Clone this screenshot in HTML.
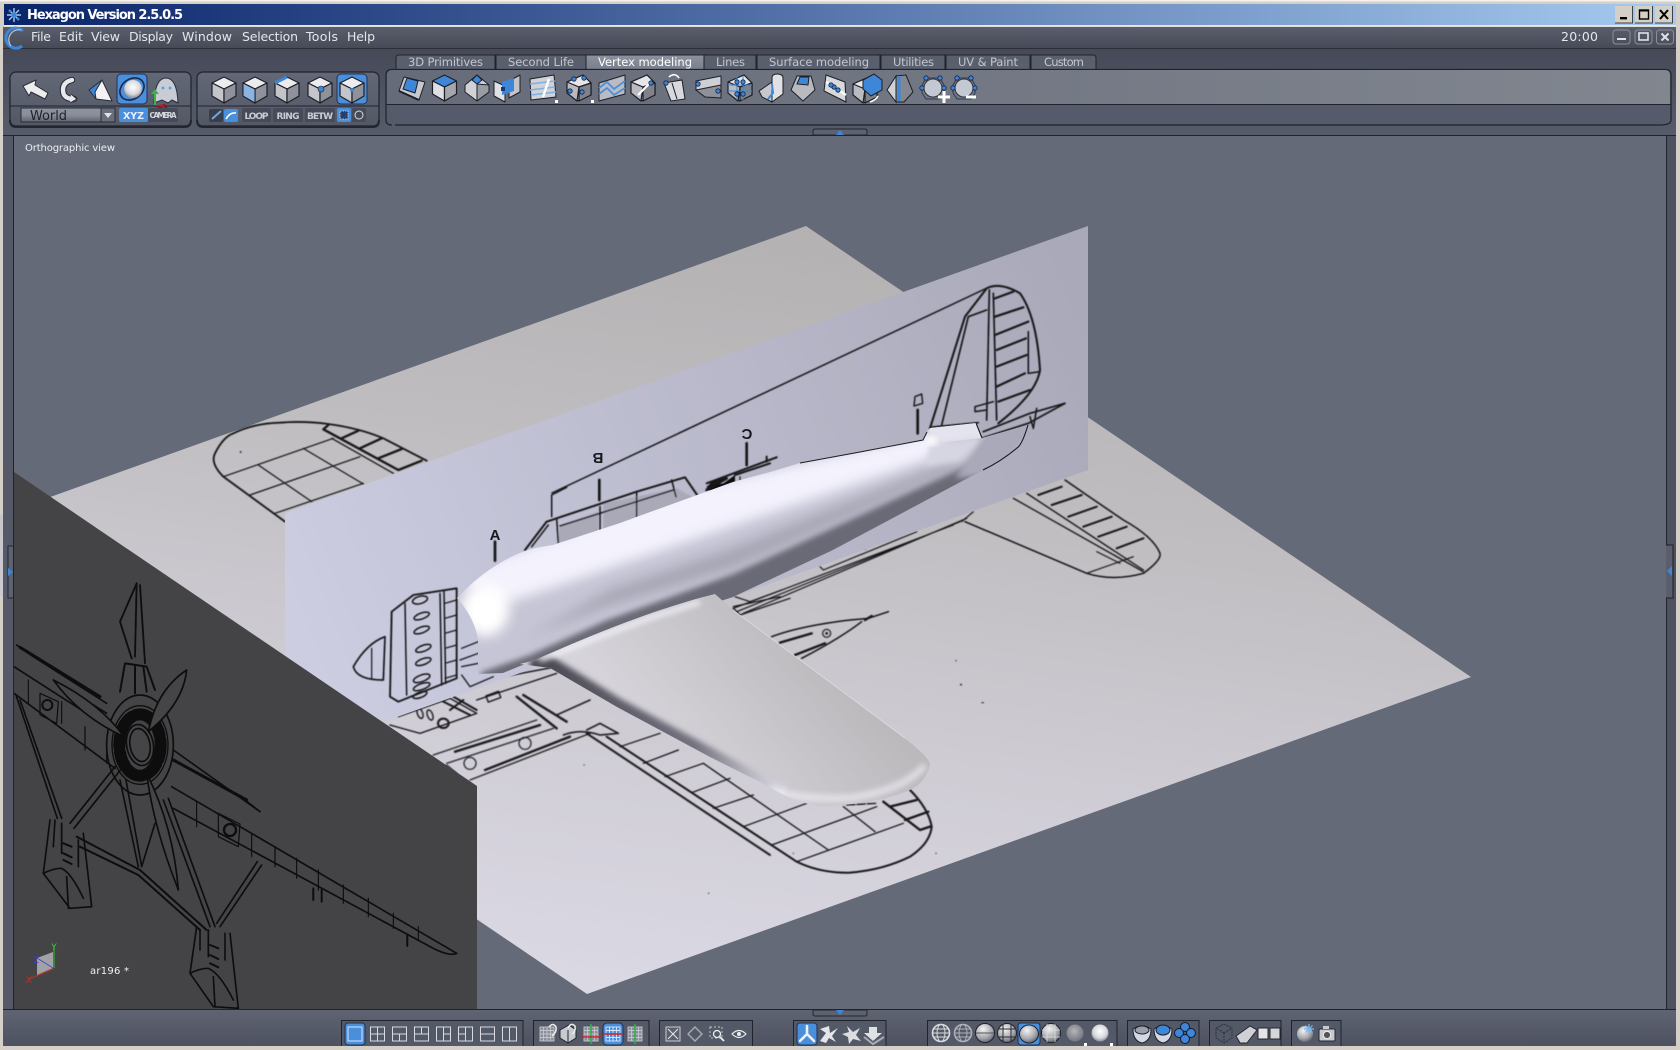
<!DOCTYPE html>
<html><head><meta charset="utf-8"><title>Hexagon Version 2.5.0.5</title>
<style>html,body{margin:0;padding:0;background:#d4d0c8;overflow:hidden}svg{display:block}text{font-family:"DejaVu Sans","Liberation Sans",sans-serif}</style></head>
<body>
<svg xmlns="http://www.w3.org/2000/svg" width="1680" height="1050" viewBox="0 0 1680 1050">
<defs>
<linearGradient id="title" x1="0" x2="1" y1="0" y2="0"><stop offset="0" stop-color="#0a246a"/><stop offset="1" stop-color="#a6caf0"/></linearGradient>
<linearGradient id="menu" x1="0" x2="0" y1="0" y2="1"><stop offset="0" stop-color="#5a5e6d"/><stop offset="1" stop-color="#474b58"/></linearGradient>
<linearGradient id="tbar" x1="0" x2="0" y1="0" y2="1"><stop offset="0" stop-color="#464a58"/><stop offset="1" stop-color="#575c6b"/></linearGradient>
<linearGradient id="bbar" x1="0" x2="0" y1="0" y2="1"><stop offset="0" stop-color="#5f6472"/><stop offset="1" stop-color="#4d5160"/></linearGradient>
<linearGradient id="pup" x1="0" x2="1" y1="0" y2="0"><stop offset="0" stop-color="#666b7a"/><stop offset="1" stop-color="#81868f"/></linearGradient>
<linearGradient id="pan" x1="0" x2="0" y1="0" y2="1"><stop offset="0" stop-color="#636877"/><stop offset="1" stop-color="#535866"/></linearGradient>
<linearGradient id="acttab" x1="0" x2="0" y1="0" y2="1"><stop offset="0" stop-color="#8d929f"/><stop offset="1" stop-color="#797e8c"/></linearGradient>
<linearGradient id="combo" x1="0" x2="0" y1="0" y2="1"><stop offset="0" stop-color="#8f93a0"/><stop offset=".5" stop-color="#8a8e9a"/><stop offset="1" stop-color="#5f6370"/></linearGradient>
<linearGradient id="ground" gradientUnits="userSpaceOnUse" x1="806" y1="226" x2="700" y2="994"><stop offset="0" stop-color="#b3b1b1"/><stop offset=".35" stop-color="#c0bec1"/><stop offset=".65" stop-color="#cecbd3"/><stop offset="1" stop-color="#dad8e3"/></linearGradient>
<linearGradient id="side" gradientUnits="userSpaceOnUse" x1="300" y1="640" x2="1088" y2="330"><stop offset="0" stop-color="#cdcde2"/><stop offset="1" stop-color="#a9a9b9"/></linearGradient>
<linearGradient id="wing" gradientUnits="userSpaceOnUse" x1="820" y1="650" x2="680" y2="770"><stop offset="0" stop-color="#bbb9bc"/><stop offset="1" stop-color="#d6d4da"/></linearGradient>
<linearGradient id="wstroke" gradientUnits="userSpaceOnUse" x1="550" y1="667" x2="790" y2="800"><stop offset="0" stop-color="#4d4c56"/><stop offset=".6" stop-color="#73727e"/><stop offset="1" stop-color="#e8e7f2"/></linearGradient>
<radialGradient id="sph" cx=".4" cy=".3" r=".8"><stop offset="0" stop-color="#f4f4f4"/><stop offset=".6" stop-color="#a4a6ac"/><stop offset="1" stop-color="#4e505a"/></radialGradient>
<radialGradient id="sphw" cx=".5" cy=".4" r=".65"><stop offset="0" stop-color="#fff"/><stop offset=".6" stop-color="#d8d9de"/><stop offset="1" stop-color="#7a7d88"/></radialGradient>
<radialGradient id="sphg" cx=".45" cy=".4" r=".7"><stop offset="0" stop-color="#b4b5ba"/><stop offset="1" stop-color="#6a6c76"/></radialGradient>
<clipPath id="fusclip"><path d="M457,598 C470,585 485,570 513,556 C530,548 540,547 553,545 L620,523 L733,482 L770,472 L800,463 L860,452 L923,440 L927,432 L930,428 L976,423 L982,438 L1028,425 C1025,440 1010,455 983,470 L833,550 L733,597 L600,640 L520,666 L503,673 L478,674 L478,640 C476,625 468,610 457,598 Z"/></clipPath>
<clipPath id="wingclip"><path d="M520,664 L535,660 C580,640 650,610 715,594 L733,610 L907,740 Q930,758 930,765 Q925,785 905,792 Q870,805 820,806 Q795,803 770,787 L710,757 L617,707 L550,668 Z"/></clipPath>
<filter id="b04" x="-5%" y="-5%" width="110%" height="110%"><feGaussianBlur stdDeviation=".4"/></filter>
<filter id="b3" x="-20%" y="-20%" width="140%" height="140%"><feGaussianBlur stdDeviation="3"/></filter>
<filter id="b6" x="-30%" y="-30%" width="160%" height="160%"><feGaussianBlur stdDeviation="6"/></filter>
<g id="cube" stroke="#1d1f26" stroke-width="1.2" stroke-linejoin="round"><polygon points="0,-13 12,-7 0,-1 -12,-7" fill="#ececee"/><polygon points="-12,-7 0,-1 0,13 -12,6" fill="#c3c5ca"/><polygon points="12,-7 0,-1 0,13 12,6" fill="#8f929a"/></g>
<g id="cubeb" stroke="#1d1f26" stroke-width="1.2" stroke-linejoin="round"><polygon points="0,-13 12,-7 0,-1 -12,-7" fill="#3d86d8"/><polygon points="-12,-7 0,-1 0,13 -12,6" fill="#dfe0e4"/><polygon points="12,-7 0,-1 0,13 12,6" fill="#a3a6ac"/></g>
<g id="mod" stroke="#1d1f26" stroke-width="1.2" stroke-linejoin="round"><polygon points="-12,-6 4,-13 12,-5 12,7 -2,13 -12,5" fill="#b9bbc1"/><polygon points="-12,-6 0,-1 12,-5 4,-13" fill="#e6e6e9"/><polygon points="0,-1 0,13 12,7 12,-5" fill="#7f828a"/><path d="M0,-1 L-2,13" fill="none"/></g>
<g id="dot"><circle r="2.2" fill="#3d86d8" stroke="#16233e" stroke-width=".8"/></g>
<g id="ball"><circle r="9.5" fill="url(#sph)" stroke="#20222a"/></g>
</defs>

<rect width="1680" height="1050" fill="#d4d0c8"/>
<rect x="0" y="0" width="1680" height="1.5" fill="#f4f2ea"/>
<rect x="4" y="4" width="1672" height="21" fill="url(#title)"/>
<rect x="4" y="25" width="1672" height="1.5" fill="#e8e8e8"/>
<rect x="3" y="27" width="1673" height="1019" fill="#50556a"/>
<rect x="3" y="27" width="1673" height="21" fill="url(#menu)"/>
<rect x="3" y="48" width="1673" height="1" fill="#2c2f38"/>
<rect x="3" y="49" width="1673" height="87" fill="url(#tbar)"/>
<rect x="3" y="135" width="1673" height="1" fill="#21242c"/>

<!-- title bar -->
<g stroke="#a8cdf2" stroke-width="1.4" fill="none"><path d="M14,8 V22 M7,15 H21 M9,10 L19,20 M19,10 L9,20"/></g>
<g fill="#3a86d8"><circle cx="14" cy="15" r="2.4"/><circle cx="10" cy="11" r="1.4"/><circle cx="18" cy="19" r="1.4"/></g>
<text x="27" y="19" font-size="13" font-weight="bold" fill="#fff" textLength="156" lengthAdjust="spacing">Hexagon Version 2.5.0.5</text>
<g><rect x="1615" y="6" width="18" height="17" fill="#d4d0c8"/><rect x="1635" y="6" width="18" height="17" fill="#d4d0c8"/><rect x="1655" y="6" width="18" height="17" fill="#d4d0c8"/>
<path d="M1632.5,6 V23 H1615 M1652.5,6 V23 H1635 M1672.5,6 V23 H1655" stroke="#404040" fill="none"/>
<rect x="1620" y="17" width="7" height="2.4" fill="#000"/><rect x="1639.5" y="10" width="9" height="9" fill="none" stroke="#000" stroke-width="1.4"/><rect x="1639" y="9.5" width="10" height="2" fill="#000"/>
<path d="M1660,10 L1668,19 M1668,10 L1660,19" stroke="#000" stroke-width="2"/></g>

<!-- menu -->
<path d="M23,31 A10,10 0 1 0 22,46" fill="none" stroke="#3d86d8" stroke-width="3"/><path d="M21,30 A10,10 0 0 0 11,46" fill="none" stroke="#c6d6ea" stroke-width="1"/>
<g font-size="12.5" fill="#e4e6ea">
<text x="31" y="41" textLength="20" lengthAdjust="spacing">File</text><text x="59" y="41" textLength="24" lengthAdjust="spacing">Edit</text><text x="91" y="41" textLength="29" lengthAdjust="spacing">View</text><text x="129" y="41" textLength="44" lengthAdjust="spacing">Display</text><text x="182" y="41" textLength="50" lengthAdjust="spacing">Window</text><text x="242" y="41" textLength="56" lengthAdjust="spacing">Selection</text><text x="306" y="41" textLength="32" lengthAdjust="spacing">Tools</text><text x="347" y="41" textLength="28" lengthAdjust="spacing">Help</text>
<text x="1561" y="41" textLength="37" lengthAdjust="spacing">20:00</text></g>
<g fill="none" stroke="#8b8f9b"><rect x="1613" y="30" width="17" height="14" rx="3"/><rect x="1635" y="30" width="17" height="14" rx="3"/><rect x="1656.5" y="30" width="17" height="14" rx="3"/></g>
<rect x="1617" y="38" width="9" height="2" fill="#dfe1e6"/><rect x="1639" y="33" width="9" height="7" fill="none" stroke="#dfe1e6" stroke-width="1.6"/><path d="M1661.5,33.5 L1668.5,40.5 M1668.5,33.5 L1661.5,40.5" stroke="#dfe1e6" stroke-width="2"/>

<!-- tabs -->
<g stroke="#20232b" fill="#5a5f6e">
<path d="M396,70 V58 Q396,55 399,55 H495 V70"/><path d="M496,70 V55 H586 V70"/><path d="M704,70 V55 H756 V70"/><path d="M757,70 V55 H880 V70"/><path d="M881,70 V55 H945 V70"/><path d="M946,70 V55 H1030 V70"/><path d="M1031,70 V55 H1093 Q1096,55 1096,58 V70"/>
</g>
<path d="M586,70 V55 H704 V70" fill="url(#acttab)" stroke="#20232b"/>
<g font-size="11.5" fill="#c2c6cf">
<text x="408" y="66" textLength="75" lengthAdjust="spacing">3D Primitives</text><text x="508" y="66" textLength="66" lengthAdjust="spacing">Second Life</text>
<text x="598" y="66" textLength="94" lengthAdjust="spacing" fill="#fff">Vertex modeling</text><text x="716" y="66" textLength="29" lengthAdjust="spacing">Lines</text><text x="769" y="66" textLength="100" lengthAdjust="spacing">Surface modeling</text><text x="893" y="66" textLength="41" lengthAdjust="spacing">Utilities</text><text x="958" y="66" textLength="60" lengthAdjust="spacing">UV &amp; Paint</text><text x="1044" y="66" textLength="40" lengthAdjust="spacing">Custom</text></g>

<!-- panels -->
<rect x="10" y="72" width="181" height="54" rx="6" fill="url(#pan)" stroke="#20232b" stroke-width="1.2"/>
<rect x="197" y="72" width="182" height="54" rx="6" fill="url(#pan)" stroke="#20232b" stroke-width="1.2"/>
<path d="M10,106 H191 M197,106 H379" stroke="#20232b"/>
<path d="M10,120 Q10,127 16,127 H185 Q191,127 191,120 M197,120 Q197,127 203,127 H373 Q379,127 379,120" fill="none" stroke="#23262e" stroke-width="2"/>
<path d="M395,125 H1660 Q1671,125 1671,120 V75 Q1671,69.5 1665,69.5 H392 Q386,69.5 386,75 V120 Q386,125 392,125" fill="#565b6b" stroke="#20232b" stroke-width="1.2"/>
<path d="M387,104 V75 Q387,70 392,70 H1665 Q1670,70 1670,75 V104 Z" fill="url(#pup)"/>
<path d="M386,104.5 H1671" stroke="#20232b"/>

<!-- panel 1 icons -->
<g stroke="#2a2c34" stroke-width="1" stroke-linejoin="round">
<polygon points="23,86 36,80 35,85 48,93 45,99 31,92 29,96" fill="#eceded"/>
</g>
<path d="M72,80 Q63,82 63,90 Q63,99 74,99" fill="none" stroke="#2a2c34" stroke-width="6.5" stroke-linecap="round"/>
<path d="M72,80 Q63,82 63,90 Q63,99 74,99" fill="none" stroke="#e8e9ec" stroke-width="4.4" stroke-linecap="round"/>
<path d="M71,94 L77,99 L70,103" fill="#e8e9ec" stroke="#2a2c34"/>
<g stroke="#2a2c34" stroke-linejoin="round"><polygon points="102,80 112,101 96,99 90,90" fill="#f2f2f4"/><polygon points="102,80 89,90 96,99 95,92" fill="#3d86d8"/></g>
<rect x="117" y="74" width="30" height="30" rx="4" fill="#4a8fdc" stroke="#23304e"/>
<ellipse cx="132" cy="89" rx="13" ry="10" transform="rotate(-35 132 89)" fill="none" stroke="#1c2a4a" stroke-width="1.6"/>
<circle cx="133" cy="89" r="9" fill="url(#sphw)"/>
<path d="M154,103 Q155,78 166,78 Q177,78 178,103 L172,100 L168,103 L162,100 Z" fill="#c8ccd5" stroke="#2a2c34"/><circle cx="163" cy="88" r="1.5" fill="#6aa0dc"/><circle cx="170" cy="88" r="1.5" fill="#6aa0dc"/>
<path d="M154,105 V94 H151 L155,89 L159,94 H156 V105 Z" fill="#3cb24a"/><path d="M155,106 L168,110 L164,104" fill="#b01c28" stroke="#7a1018"/>
<rect x="21" y="108" width="80" height="14" fill="url(#combo)" stroke="#2a2d36"/><text x="30" y="120" font-size="13" fill="#1f2127" textLength="37" lengthAdjust="spacing">World</text>
<rect x="101" y="108" width="14" height="14" fill="#6a6e7b" stroke="#2a2d36"/><path d="M104,113 H112 L108,118 Z" fill="#e2e3e8"/>
<rect x="119" y="108" width="29" height="14" rx="2" fill="#4a8fdc"/><text x="133.5" y="119" font-size="9.5" font-weight="bold" fill="#e8f0fa" text-anchor="middle">XYZ</text>
<rect x="148" y="108" width="30" height="14" rx="2" fill="#474b59"/><text x="163" y="118" font-size="7.5" font-weight="bold" fill="#d2d5dc" text-anchor="middle" textLength="27">CAMERA</text>

<!-- panel 2 icons -->
<use href="#cube" x="224" y="90"/><use href="#cube" x="255" y="90"/><use href="#cube" x="287" y="90"/><use href="#cube" x="320" y="90"/>
<path d="M243,83 L255,89 L255,103 L243,96 Z" fill="#8cb4e0" stroke="#1d1f26"/>
<path d="M275,83 L287,77" stroke="#3d86d8" stroke-width="3"/><circle cx="321" cy="89" r="3" fill="#3d86d8" stroke="#1d1f26" stroke-width=".6"/>
<rect x="337" y="74" width="30" height="30" rx="4" fill="#4a8fdc" stroke="#23304e"/><use href="#cube" x="352" y="90"/><circle cx="352" cy="90" r="2" fill="#3d86d8"/>
<rect x="209" y="109" width="14" height="13" rx="2" fill="#3a3e4a"/><path d="M212,119 L221,111" stroke="#6ea8e4" stroke-width="2"/>
<rect x="224" y="109" width="14" height="13" rx="2" fill="#4a8fdc"/><path d="M226,119 Q230,112 236,113" stroke="#fff" stroke-width="1.6" fill="none"/>
<g fill="#474b59"><rect x="242" y="108" width="29" height="14" rx="2"/><rect x="273" y="108" width="30" height="14" rx="2"/><rect x="305" y="108" width="30" height="14" rx="2"/></g>
<g font-size="9" font-weight="bold" fill="#c8ccd5" text-anchor="middle"><text x="256.5" y="119" textLength="24">LOOP</text><text x="288" y="119" textLength="23">RING</text><text x="320" y="119" textLength="26">BETW</text></g>
<rect x="337" y="108" width="14" height="14" rx="2" fill="#4a8fdc"/><rect x="340" y="111" width="8" height="8" fill="#28406e" stroke="#cfe0f4" stroke-width=".8" stroke-dasharray="1.5 1"/>
<rect x="352" y="108" width="14" height="14" rx="2" fill="#474b59"/><circle cx="359" cy="115" r="4" fill="none" stroke="#d8dbe2"/>

<!-- vertex modeling icons -->
<g transform="translate(412,88)" stroke="#1d1f26" stroke-linejoin="round"><polygon points="-13,3 -8,-11 13,-6 7,12" fill="#c6c8ce"/><polygon points="-9,1 -5,-10 6,-7 3,5" fill="#3d86d8"/><path d="M-13,3 L7,12" stroke-width="2"/></g>
<use href="#cubeb" x="444.500" y="88"/>
<g transform="translate(477,88)" stroke="#1d1f26" stroke-linejoin="round"><polygon points="-12,-3 0,-13 12,-3 12,4 0,13 -12,4" fill="#d0d2d6"/><polygon points="-5,-8 0,-13 5,-8 0,-4" fill="#3d86d8"/><polygon points="0,-4 12,-3 12,4 0,13" fill="#999ca3"/></g>
<g transform="translate(507,88)" stroke="#1d1f26" stroke-linejoin="round"><polygon points="-13,-7 -2,-2 -2,14 -13,8" fill="#e0e1e5"/><polygon points="13,-13 2,-7 2,10 13,4" fill="#c2c4ca"/><polygon points="-5,-6 7,-10 7,3 -5,7" fill="#3d86d8" stroke="none"/><rect x="-6" y="-1" width="4" height="4" fill="#163a78" stroke="none"/></g>
<g transform="translate(543,88)" stroke="#1d1f26" stroke-linejoin="round"><polygon points="-13,-9 11,-13 13,9 -12,12" fill="#d0d2d8"/><path d="M-13,-4 L12,-7 M-13,2 L12,-1 M-12,7 L13,4" stroke="#7fb0e2" stroke-width="1.6"/><path d="M6,-9 L0,9" stroke="#fff" stroke-width="2.4"/><rect x="12" y="12" width="3" height="3" fill="#fff" stroke="none"/></g>
<g transform="translate(579,88)"><use href="#mod"/><use href="#dot" x="-5" y="-9"/><use href="#dot" x="5" y="-10"/><use href="#dot" x="-9" y="3"/><use href="#dot" x="3" y="4"/><rect x="12" y="12" width="3" height="3" fill="#fff"/></g>
<g transform="translate(612,88)" stroke="#1d1f26" stroke-linejoin="round"><polygon points="-13,-5 13,-13 13,6 -13,13" fill="#babcc2"/><path d="M-13,0 L-5,-6 L2,1 L13,-7 M-13,6 L-5,0 L2,7 L13,0" stroke="#4f8fd8" stroke-width="1.8" fill="none"/></g>
<g transform="translate(643,88)"><use href="#mod"/><path d="M-5,7 L8,-6" stroke="#fff" stroke-width="2"/><use href="#dot" x="8" y="-5"/></g>
<g transform="translate(674,88)"><polygon points="-10,-5 8,-8 11,11 -3,13" fill="#d8d9de" stroke="#1d1f26"/><path d="M-2,-5 L3,11" stroke="#1d1f26"/><path d="M-5,-11 Q1,-16 5,-10" stroke="#fff" stroke-width="1.6" fill="none"/><use href="#dot" x="-8" y="-5"/></g>
<g transform="translate(709,88)"><polygon points="-13,-7 12,-12 12,10 -13,2" fill="#cfd0d5" stroke="#1d1f26"/><polygon points="-13,2 12,-3 12,10 -4,9" fill="#8f9199" stroke="#1d1f26"/><use href="#dot" x="-11" y="-4"/><use href="#dot" x="9" y="3"/></g>
<g transform="translate(740,88)"><use href="#mod"/><path d="M-3,-12 V12 M3,-12 V12 M-12,-3 H12 M-12,3 H12" stroke="#3d86d8" fill="none"/><use href="#dot" x="-3" y="-6"/><use href="#dot" x="3" y="-6"/><use href="#dot" x="-3" y="6"/><use href="#dot" x="3" y="6"/></g>
<g transform="translate(772,88)" stroke="#1d1f26"><polygon points="-13,3 0,-6 0,14 -10,9" fill="#c6c8cd"/><path d="M0,-10 Q0,-14 5,-14 Q11,-14 11,-10 V6 L0,14 Z" fill="#e0e1e4"/><path d="M0,-4 L1,5 L-4,11" stroke="#3d86d8" stroke-width="2" fill="none"/></g>
<g transform="translate(803,88)" stroke="#1d1f26"><polygon points="-12,2 -6,-12 8,-12 12,2 0,13" fill="#b8bac0"/><polygon points="-6,-4 -3,-11 6,-11 5,-3" fill="#3d86d8"/></g>
<g transform="translate(835,88)"><polygon points="-9,-13 10,-6 11,14 -11,3" fill="#d8d9dd" stroke="#1d1f26"/><path d="M-9,-6 L11,7" stroke="#fff" stroke-width="2.4"/><use href="#dot" x="-1" y="-1"/><use href="#dot" x="3" y="2"/><use href="#dot" x="-4" y="-3"/></g>
<g transform="translate(868,88)"><use href="#mod" transform="translate(-3,2)"/><polygon points="-5,-8 6,-14 14,-8 14,2 3,8 -5,1" fill="#3d86d8" stroke="#1d1f26"/><path d="M2,14 Q8,12 10,8" stroke="#fff" stroke-width="1.6" fill="none"/></g>
<g transform="translate(900,88)" stroke="#1d1f26"><polygon points="-13,2 -4,-12 -4,14" fill="#d0d2d6"/><polygon points="-4,-12 6,-13 13,4 4,14 -4,14" fill="#84878f"/><path d="M-1,-12 V13" stroke="#3d86d8" stroke-width="3"/></g>
<g transform="translate(933,88)"><circle r="9" fill="#c4c8d2" stroke="#333"/><path d="M-7,-10 H7 L11,-3 V5 L7,11 H-7 L-11,5 V-3 Z" fill="none" stroke="#2a3c5e"/><use href="#dot" x="-7" y="-10"/><use href="#dot" x="7" y="-10"/><use href="#dot" x="-11" y="0"/><use href="#dot" x="11" y="0"/><path d="M5,9 H17 M11,3 V15" stroke="#fff" stroke-width="3"/></g>
<g transform="translate(964,88)"><circle r="9" fill="#c4c8d2" stroke="#333"/><path d="M-7,-10 H7 L11,-3 V5 L7,11 H-7 L-11,5 V-3 Z" fill="none" stroke="#2a3c5e"/><use href="#dot" x="-7" y="-10"/><use href="#dot" x="7" y="-10"/><use href="#dot" x="-11" y="0"/><use href="#dot" x="11" y="0"/><path d="M2,9 H12" stroke="#fff" stroke-width="3"/></g>

<!-- viewport -->
<rect x="14" y="136" width="1652" height="873" fill="#656a78"/>
<polygon points="806,226 1471,677 587,994 -78,543" fill="url(#ground)"/>

<!-- ground drawing -->
<g fill="none" stroke="#141418" stroke-width="4" filter="url(#b04)" stroke-linecap="round" stroke-linejoin="round">
 <g transform="translate(200,400) scale(.33333)">
  <path d="M255,365 L70,230 Q30,190 45,160 Q70,110 100,100 Q160,70 240,68 Q310,62 385,72 Q480,85 550,115 L680,182" stroke-width="5.5"/>
  <path d="M70,230 L400,115 M150,285 L480,170 M225,340 L490,250 M175,195 L335,305 M310,145 L490,252 M395,115 L580,220" stroke-width="3.6"/>
  <path d="M385,75 L370,88 L595,210 L665,182" stroke-width="7"/>
  <path d="M425,115 L475,92 M480,145 L545,115 M535,175 L605,147" stroke-width="7"/>
  <circle cx="122" cy="156" r="3" fill="#333" stroke="none"/>
 </g>
 <g transform="translate(500,600) scale(.33333)">
  <path d="M320,410 L890,785 Q960,820 1050,818 Q1150,810 1230,770 Q1290,730 1295,680 Q1285,625 1230,570" stroke-width="6"/>
  <path d="M360,440 L480,400 M430,490 L535,450 M495,530 L610,490 M575,578 L690,535 M640,625 L760,585 M730,680 L920,610 M815,735 L1130,620 M890,785 L1210,670 M610,490 L985,750 M1030,620 L1125,695" stroke-width="3.8"/>
  <path d="M1150,605 L1260,690 L1290,680 M1170,620 L1250,600 M1215,660 L1285,635" stroke-width="7"/>
  <path d="M1040,615 L1130,610" stroke-dasharray="25 6"/>
  <path d="M815,110 Q900,78 1050,60 L1105,55 L1165,35 M905,175 Q1020,115 1085,65" stroke-width="4.5"/>
  <path d="M840,128 L935,100 M885,165 L975,130 M1095,60 L1115,48" stroke-width="7"/>
  <circle cx="980" cy="100" r="12" stroke-width="3.4"/><circle cx="980" cy="100" r="2" fill="#222"/>
  <path d="M700,20 L840,-10 M720,45 L870,-5 M700,25 L720,45" stroke-width="3.8"/>
  <g fill="#333" stroke="none"><circle cx="1368" cy="182" r="2"/><circle cx="1383" cy="254" r="3"/><ellipse cx="1448" cy="308" rx="4" ry="2"/><circle cx="1308" cy="760" r="2"/><circle cx="880" cy="760" r="3" fill="#888"/><circle cx="626" cy="880" r="2"/><circle cx="252" cy="495" r="2"/></g>
 </g>
 <g transform="translate(700,220) scale(.33333)">
  <path d="M795,905 L1160,1060 Q1240,1085 1330,1060 Q1385,1020 1380,1000 Q1360,950 1270,900 L1160,825 L1095,780" stroke-width="4.5"/>
  <path d="M940,835 L1330,1055 M980,820 L1330,1050" stroke-width="4"/>
  <path d="M1015,825 L1085,800 M1055,855 L1145,825 M1105,890 L1190,860 M1150,920 L1235,890 M1195,950 L1280,920 M1250,985 L1330,955" stroke-width="6"/>
  <path d="M1160,1060 L1245,1030 L1300,1010 M1190,995 L1260,1030" stroke-width="3.4"/>
  <path d="M100,1165 L760,915 M110,1175 L780,905 M130,1180 L800,895" stroke-width="3.4"/>
  <path d="M105,1130 L150,1145 L245,1110 M360,1040 L370,1050 L650,935" stroke-width="3.4"/>
  <path d="M485,985 V940 M510,965 Q530,950 510,935 M475,985 H497" stroke-width="6"/>
  <path d="M785,905 L820,875" stroke-width="3.4"/>
 </g>
 <g transform="translate(270,400) scale(.33333)">
  <path d="M360,975 L450,1000 L620,940 L540,895 L385,950" stroke-width="4"/>
  <path d="M520,905 L600,945 M550,890 L620,930 M540,930 L580,900" stroke-width="6"/>
  <ellipse cx="450" cy="940" rx="8" ry="16" transform="rotate(-20 450 940)"/><ellipse cx="480" cy="945" rx="8" ry="16" transform="rotate(-20 480 945)"/><ellipse cx="520" cy="970" rx="16" ry="14" stroke-width="6"/>
  <path d="M620,900 L860,820 M700,830 L860,800" stroke-width="4"/>
  <rect x="650" y="880" width="40" height="20" transform="rotate(-20 670 890)"/>
  <path d="M490,1065 L800,960 M530,1090 L850,985 M600,1140 L960,1000 M530,1095 L560,1120" stroke-width="3.8"/>
  <path d="M555,1055 L810,975 M645,1110 L900,1010 M740,890 L860,985 M760,885 L890,965" stroke-width="7"/>
  <circle cx="765" cy="1030" r="18" stroke-width="3.4"/><circle cx="600" cy="1090" r="18" stroke-width="3.4"/>
  <path d="M880,1005 Q930,985 990,1005 L1045,1000 L990,970 L950,990 M860,945 L960,900" stroke-width="4.5"/>
  <path d="M950,1000 L1500,1365" stroke-width="6"/>
 </g>
</g>

<!-- side plane -->
<polygon points="285,513 1088,226 1088,470 285,757" fill="url(#side)"/>
<g fill="none" stroke="#141418" stroke-width="4" filter="url(#b04)" stroke-linecap="round" stroke-linejoin="round">
 <g transform="translate(270,400) scale(.33333)">
  <polygon points="1000,390 1000,310 1220,265 1285,300 1100,390" fill="#a9a9b8" stroke="none"/>
  <polygon points="860,430 870,375 985,335 985,400" fill="#a9a9b8" stroke="none"/>
  <path d="M345,710 Q290,730 250,800 Q260,840 340,840 Z" stroke-width="5"/><path d="M305,745 V835" stroke-width="3.6"/>
  <path d="M365,635 L360,890 L385,905 L560,835 L560,565 L430,585 Z" stroke-width="5.5"/>
  <path d="M405,610 L410,885 M510,580 L515,855 M522,575 L527,850" stroke-width="4.4"/>
  <path d="M525,610 L560,600 M525,655 L560,645 M525,700 L560,690 M525,745 L560,735 M525,790 L560,780 M525,835 L560,825" stroke-width="3.6"/>
  <g stroke-width="4.5"><ellipse cx="450" cy="600" rx="23" ry="11" transform="rotate(-15 450 600)"/><ellipse cx="455" cy="648" rx="24" ry="9" transform="rotate(-20 455 648)"/><ellipse cx="455" cy="690" rx="24" ry="9" transform="rotate(-20 455 690)"/><ellipse cx="460" cy="745" rx="24" ry="9" transform="rotate(-20 460 745)"/><ellipse cx="460" cy="785" rx="24" ry="9" transform="rotate(-20 460 785)"/><ellipse cx="455" cy="835" rx="26" ry="10" transform="rotate(-20 455 835)"/><ellipse cx="455" cy="860" rx="26" ry="9" transform="rotate(-20 455 860)"/><ellipse cx="450" cy="885" rx="22" ry="8" transform="rotate(-20 450 885)"/></g>
  <path d="M575,745 L625,725 M570,780 L625,760 M575,800 L625,790 M575,825 L600,860 L670,830" stroke-width="3.8"/>
  <path d="M765,450 L830,365 L860,355 L1100,275 L1245,232 L1285,290" stroke-width="6"/>
  <path d="M860,355 L865,430 M990,320 V395 M1100,275 V360 M1205,240 L1218,290 M870,378 L1210,270" stroke-width="4.5"/>
  <path d="M845,350 V285 L890,262 M785,440 L835,375" stroke-width="4.4"/>
  <path d="M1310,258 L1360,250 L1395,225 L1395,250 L1360,275 L1325,285 Z" fill="#111" stroke="none"/>
  <path d="M1395,225 L1500,190" stroke-width="6"/>
  <path d="M675,425 V482 M988,240 V300 M1430,130 V195" stroke-width="8"/>
 </g>
 <path d="M552,493 L987,288" stroke-width="1.5"/>
 <g transform="translate(700,220) scale(.33333)">
  <path d="M20,790 L230,712 M200,710 V725" stroke-width="6"/>
  <path d="M20,810 L80,775 L35,790 Z" stroke-width="8" fill="#111"/>
  <path d="M120,770 V790" stroke-width="3.4"/>
  <path d="M690,625 L795,290 L860,205 Q900,185 960,220 Q1010,290 1020,450 Q1010,520 895,610" stroke-width="6"/>
  <path d="M725,615 L805,290 L860,270 M868,210 L860,600 M880,220 L890,600 M690,622 L835,608" stroke-width="5"/>
  <path d="M885,235 L940,215 M885,290 L970,262 M885,345 L985,305 M890,390 L978,355 M890,440 L980,405 M890,500 L975,460 M895,545 L990,510" stroke-width="6.5"/>
  <path d="M985,335 V460 L1020,455 M825,560 L880,545 M825,575 L860,570 M825,560 V575" stroke-width="4.5"/>
  <path d="M1095,550 L990,580 L850,635 M845,655 L985,610 L1095,550" stroke-width="5"/>
  <path d="M990,590 L1000,625 M1010,565 L1000,625" stroke-width="4.5"/>
  <path d="M653,570 V640" stroke-width="8"/>
  <path d="M645,530 L665,522 L668,550 L642,558 Z" stroke-width="4"/>
 </g>
</g>
<g font-size="15" font-weight="bold" fill="#18181c" text-anchor="middle">
<text x="495" y="540" style="font-family:'Liberation Sans',sans-serif">A</text>
<text transform="translate(598,453) rotate(180)" style="font-family:'Liberation Sans',sans-serif">B</text>
<text transform="translate(747,429) rotate(180)" style="font-family:'Liberation Sans',sans-serif">C</text>
</g>

<!-- fuselage -->
<g clip-path="url(#fusclip)">
 <rect x="440" y="410" width="620" height="290" fill="#c6c5d5"/>
 <polygon points="450,575 560,535 680,490 900,440 940,430 948,453 733,526 613,567 498,606" fill="#f3f2fd" filter="url(#b6)"/>
 <ellipse cx="485" cy="610" rx="24" ry="26" fill="#fff" filter="url(#b6)"/>
 <polygon points="540,630 610,590 733,548 960,458 971,464 733,568 607,606 520,640" fill="#a6a5b4" filter="url(#b6)"/>
 <polygon points="482,672 530,655 607,620 733,574 971,464 1000,470 733,606 602,645 476,690" fill="#6b6a77" filter="url(#b3)"/>
 <polygon points="985,432 1032,420 1030,445 990,476 955,478" fill="#a9a9b9" filter="url(#b3)"/>
 <polygon points="930,428 976,423 982,438 930,444" fill="#e4e3ee"/>
 <polygon points="930,444 982,438 960,462 925,466" fill="#d6d5e2" filter="url(#b3)"/>
 <ellipse cx="932" cy="441" rx="5" ry="4" fill="#fff" filter="url(#b3)"/>
</g>
<path d="M1028,425 Q1022,445 1017,448 Q1000,462 983,470 M976,423 L982,438" fill="none" stroke="#18181c" stroke-width="1.1"/>
<!-- wing -->
<g clip-path="url(#wingclip)">
 <rect x="510" y="580" width="430" height="240" fill="url(#wing)"/>
 <path d="M530,668 L550,666 L617,707 L710,757 L783,797" fill="none" stroke="url(#wstroke)" stroke-width="18" filter="url(#b3)"/>
 <path d="M540,660 Q600,636 650,618 L700,602" fill="none" stroke="#f8f7ff" stroke-width="5" filter="url(#b3)" opacity=".8"/>
 <path d="M770,790 Q800,800 850,798 Q905,790 925,765" fill="none" stroke="#eeedf5" stroke-width="7" filter="url(#b3)" opacity=".7"/>
 <path d="M533,662 L562,662" stroke="#fff" stroke-width="3" filter="url(#b04)"/>
</g>
<path d="M733,610 L905,738" stroke="#e6e5e8" stroke-width=".8" fill="none" opacity=".7"/>
<path d="M800,463 L860,452 L923,440 L927,432" fill="none" stroke="#1c1c22" stroke-width="1"/>

<!-- dark plane -->
<polygon points="14,472 477,786 477,1009 14,1009" fill="#444446"/>
<g fill="none" stroke="#0f0f11" stroke-width="5" filter="url(#b04)" stroke-linejoin="round" stroke-linecap="round" transform="translate(0,560) scale(.33333)">
 <path d="M42,320 L330,505 M42,400 L345,625 M515,680 L1370,1180 Q1350,1190 1300,1165 L520,745"/>
 <path d="M85,360 V430 M185,425 V490 M255,500 V570 M320,540 V610 M590,725 V800 M755,820 V890 M825,860 V920 M890,895 V955 M955,930 V990 M1030,975 V1030 M1105,1015 V1070 M1180,1060 V1105 M1255,1100 V1140" stroke-width="3.6"/>
 <path d="M120,400 L175,425 L170,490 L120,465 Z M655,760 L720,792 L715,860 L655,830 Z" stroke-width="3.6"/>
 <circle cx="142" cy="435" r="15" stroke-width="6"/><circle cx="690" cy="810" r="18" stroke-width="7"/>
 <path d="M50,255 L100,290 L320,430 M160,360 L320,460"/><path d="M60,262 L300,410 M520,600 L740,720" stroke-width="9"/><path d="M520,570 L780,755 L735,720"/>
 <path d="M410,70 L360,185 L395,295 M410,70 L405,290 M420,75 L435,310" stroke-width="5.5"/>
 <path d="M375,310 L440,320 L465,390 M405,320 L405,400 M430,320 L440,395 M375,310 L360,395" stroke-width="6"/>
 <ellipse cx="420" cy="555" rx="100" ry="150" stroke-width="5"/>
 <ellipse cx="420" cy="555" rx="84" ry="118" stroke-width="4"/>
 <ellipse cx="420" cy="555" rx="62" ry="92" stroke="#0f0f11" stroke-width="36" stroke-dasharray="45 14"/>
 <ellipse cx="420" cy="555" rx="40" ry="62" transform="rotate(-10 420 555)" fill="#444446"/>
 <ellipse cx="420" cy="555" rx="30" ry="50" transform="rotate(-10 420 555)"/>
 <path d="M445,515 Q470,390 560,330 Q550,430 445,515 Z" fill="#444446"/>
 <path d="M372,530 Q240,470 160,360 Q300,430 372,530 Z" fill="#444446"/>
 <path d="M440,640 Q520,800 535,990 Q460,800 440,640 Z" fill="#444446"/>
 <path d="M345,620 L210,790 M360,632 L222,805 M360,660 L415,920 M378,660 L425,920 M490,720 L630,1100 M505,715 L645,1100 M465,790 L425,920 M60,420 L185,775 M48,405 L172,775 M785,915 L660,1100 M772,905 L650,1090"/>
 <path d="M230,830 L420,930 L620,1110 M240,860 L415,945 L600,1110" stroke-width="6"/>
 <path d="M150,780 L130,940 L210,1045 L275,1040 L250,820 M130,940 Q160,925 185,925 Q215,940 250,1015 M200,950 L205,1045 M165,780 L160,860 M185,790 L185,880 M235,840 V920" stroke-width="5"/>
 <path d="M190,850 L215,860 M190,880 L215,892 M190,900 L215,912" stroke-width="6"/>
 <path d="M590,1100 L570,1240 L640,1340 L715,1345 L690,1120 M570,1240 Q600,1225 625,1225 Q660,1240 700,1320 M640,1250 L645,1340 M600,1110 V1170 M625,1110 V1190 M675,1120 V1200" stroke-width="5"/>
 <path d="M630,1155 L655,1165 M630,1185 L655,1197 M630,1210 L655,1222" stroke-width="6"/>
 <path d="M940,985 V1020 M965,990 V1025 M1222,1125 V1158" stroke-width="6"/>
</g>
<!-- axis -->
<polygon points="37,958 53,952 53,968 37,975" fill="#a2a2a6"/>
<path d="M54,946 V968" stroke="#35b035" stroke-width="1.2"/><path d="M37,958 L53,968" stroke="#4a4ad0"/><path d="M29,979 L53,969" stroke="#c03030" stroke-width="1.2"/>
<g font-size="9" text-anchor="middle"><text x="54" y="950" fill="#3bd03b">Y</text><text x="36" y="963" fill="#3a3ad8">Z</text><text x="29" y="983" fill="#c82a2a">X</text></g>
<text x="25" y="151" font-size="10" fill="#eceef2" textLength="90" lengthAdjust="spacing">Orthographic view</text>
<text x="90" y="974" font-size="10" fill="#f0f0f2" textLength="39" lengthAdjust="spacing">ar196 *</text>

<!-- strips -->
<rect x="3" y="136" width="10" height="874" fill="#555968"/><rect x="13" y="136" width="1" height="874" fill="#20232b"/>
<rect x="1666" y="136" width="10" height="874" fill="#4d5160"/><rect x="1666" y="136" width="1" height="874" fill="#20232b"/>
<path d="M13,546 H8 V598 H13" fill="#5d6271" stroke="#23262e"/><polygon points="8,568 13,572 8,576" fill="#3d86d8"/>
<path d="M1666,545 H1673 V598 H1666" fill="#5a5e6d" stroke="#1d2028"/><polygon points="1672,566 1667,571 1672,576" fill="#3d86d8"/>
<path d="M813,135 V131 Q813,129 815,129 H865 Q867,129 867,131 V135 Z" fill="#5d6271" stroke="#23262e"/><polygon points="840,130 836,135 844,135" fill="#3d86d8"/>

<!-- bottom bar -->
<rect x="3" y="1010" width="1673" height="36" fill="url(#bbar)"/>
<rect x="3" y="1009" width="1673" height="1" fill="#20232b"/>
<path d="M813,1010 V1014 Q813,1016 815,1016 H865 Q867,1016 867,1014 V1010 Z" fill="#5d6271" stroke="#23262e"/><polygon points="836,1010 844,1010 840,1015" fill="#3d86d8"/>
<g fill="#545968" stroke="#20232b"><path d="M341.500,1046 V1020.500 H523 V1046"/><path d="M533.500,1046 V1020.500 H649 V1046"/><path d="M659.500,1046 V1020.500 H752.500 V1046"/><path d="M793.500,1046 V1020.500 H886 V1046"/><path d="M927.500,1046 V1020.500 H1117 V1046"/><path d="M1127.500,1046 V1020.500 H1199 V1046"/><path d="M1209.500,1046 V1020.500 H1281 V1046"/><path d="M1291.500,1046 V1020.500 H1341 V1046"/></g>
<rect x="345" y="1023" width="20" height="22" rx="3" fill="#4a8fdc" stroke="#23304e"/><rect x="348" y="1027" width="14" height="14" fill="#4a8fdc" stroke="#dbe6f4"/>
<g fill="none" stroke="#d9dbe0">
<path d="M370.500,1027 h14 v14 h-14 z M377.500,1027 v14 M370.500,1034 h14"/>
<path d="M392.500,1027 h14 v14 h-14 z M392.500,1034 h14 M399.500,1034 v7"/>
<path d="M414.500,1027 h14 v14 h-14 z M414.500,1034 h14 M421.500,1027 v7"/>
<path d="M436.500,1027 h14 v14 h-14 z M443.500,1027 v14 M443.500,1034 h7"/>
<path d="M458.500,1027 h14 v14 h-14 z M465.500,1027 v14 M458.500,1034 h7"/>
<path d="M480.500,1027 h14 v14 h-14 z M480.500,1034 h14"/>
<path d="M502.500,1027 h14 v14 h-14 z M509.500,1027 v14"/>
</g>
<!-- grid icons -->
<g stroke="#c4c6cc" stroke-width=".9" fill="#8a8d97">
<rect x="540" y="1027" width="14" height="14"/><path d="M543.500,1027 v14 M547,1027 v14 M550.500,1027 v14 M540,1030.500 h14 M540,1034 h14 M540,1037.500 h14" fill="none"/>
</g>
<path d="M549,1027 Q553,1022 556,1027 Q557,1032 552,1036" stroke="#eee" stroke-width="1.6" fill="none"/>
<path d="M560,1030 L569,1025 L576,1030 L576,1038 L568,1043 L560,1038 Z" fill="#c8cad0" stroke="#23262e"/><path d="M568,1030 V1043" stroke="#23262e"/><path d="M568,1028 Q571,1022 575,1026 Q576,1032 572,1034" stroke="#eee" stroke-width="1.5" fill="none"/>
<g stroke="#c4c6cc" stroke-width=".9" fill="#8a8d97"><rect x="584" y="1027" width="14" height="14"/><path d="M587.500,1027 v14 M591,1027 v14 M594.500,1027 v14 M584,1030.500 h14 M584,1034 h14 M584,1037.500 h14" fill="none"/></g>
<path d="M591,1024 V1044" stroke="#2fb04a" stroke-width="1.6"/><path d="M581,1037 H601" stroke="#d02028" stroke-width="1.4"/>
<rect x="603" y="1023" width="20" height="22" rx="4" fill="#4a8fdc" stroke="#23304e"/><g stroke="#dbe6f4" stroke-width=".9" fill="none"><rect x="606" y="1027" width="14" height="14"/><path d="M609.500,1027 v14 M613,1027 v14 M616.500,1027 v14 M606,1030.500 h14 M606,1034 h14 M606,1037.500 h14"/></g><path d="M603,1034 H623" stroke="#d02028" stroke-width="1.4"/>
<g stroke="#c4c6cc" stroke-width=".9" fill="#8a8d97"><rect x="628" y="1027" width="14" height="14"/><path d="M631.500,1027 v14 M635,1027 v14 M638.500,1027 v14 M628,1030.500 h14 M628,1034 h14 M628,1037.500 h14" fill="none"/></g><path d="M635,1024 V1044" stroke="#2fb04a" stroke-width="1.6"/>
<!-- view nav -->
<rect x="666" y="1027" width="14" height="14" fill="#5c606e" stroke="#c8cad0"/><path d="M668,1029 L678,1039 M678,1029 L668,1039" stroke="#e8e9ec"/>
<path d="M695,1027 L702,1034 L695,1041 L688,1034 Z" fill="none" stroke="#a8abb3" stroke-width="1.4"/>
<rect x="710" y="1027" width="12" height="11" fill="none" stroke="#c0c2c8" stroke-dasharray="2 2"/><circle cx="717" cy="1034" r="3.5" fill="none" stroke="#f0f0f2" stroke-width="1.3"/><path d="M720,1037 L724,1041" stroke="#f0f0f2" stroke-width="1.8"/>
<path d="M732,1034 Q739,1027 746,1034 Q739,1041 732,1034 Z" fill="none" stroke="#eaebee" stroke-width="1.2"/><circle cx="739" cy="1034" r="2" fill="#eaebee"/>
<!-- manip -->
<rect x="797" y="1023" width="20" height="22" rx="3" fill="#4a8fdc" stroke="#23304e"/><path d="M807,1026 V1034 L800,1041 M807,1034 L814,1041" stroke="#eef2f8" stroke-width="2.6" fill="none" stroke-linecap="round"/>
<path d="M820,1041 L826,1033 L820,1029 L829,1026 L830,1033 L838,1028 L832,1036 L836,1042 L829,1038 L826,1043 Z" fill="#e4e5e8"/>
<path d="M847,1026 L853,1032 L860,1028 L856,1035 L861,1041 L853,1039 L849,1044 L848,1037 L842,1034 L849,1032 Z" fill="#dcdde1"/>
<path d="M869,1027 H877 V1033 H882 L873,1041 L864,1033 H869 Z" fill="#e0e1e5"/><path d="M864,1037 L873,1044 L884,1037" stroke="#a8abb3" fill="none" stroke-width="2"/>
<!-- display spheres -->
<g fill="none" stroke="#d8dade"><circle cx="941" cy="1033" r="8.500" stroke-width="1.6"/><ellipse cx="941" cy="1033" rx="4" ry="8.500"/><path d="M932.500,1033 h17 M933.500,1029 h15 M933.500,1037 h15"/><circle cx="963" cy="1033" r="8.500" stroke-width="1.6" stroke="#aeb1b8"/><ellipse cx="963" cy="1033" rx="4" ry="8.500" stroke="#aeb1b8"/><path d="M954.500,1033 h17 M955.500,1029 h15 M955.500,1037 h15" stroke="#aeb1b8"/></g>
<use href="#ball" x="985" y="1033"/><path d="M976,1033 h18" stroke="#555"/>
<use href="#ball" x="1007" y="1033"/><path d="M1003,1024 v18 M1011,1024 v18 M998,1029 h18 M998,1037 h18" stroke="#2a2c34" fill="none"/>
<rect x="1018" y="1023" width="22" height="22" rx="3" fill="#4a8fdc" stroke="#23304e"/><ellipse cx="1029" cy="1034" rx="9.500" ry="9" fill="url(#sph)" stroke="#20222a"/>
<use href="#ball" x="1051" y="1033"/><path d="M1047,1024 v18 M1055,1024 v18 M1042,1030 h18 M1042,1037 h18" stroke="#ddd" stroke-width=".8"/>
<circle cx="1075" cy="1033" r="8.500" fill="url(#sphg)"/><circle cx="1100" cy="1033" r="8.500" fill="url(#sphw)"/>
<rect x="1084" y="1043" width="3" height="3" fill="#fff"/><rect x="1110" y="1043" width="3" height="3" fill="#fff"/>
<g stroke="#1e2028"><path d="M1133,1029 Q1142,1023 1151,1029 Q1151,1041 1142,1043 Q1133,1041 1133,1029 Z" fill="#d4d8e2"/><ellipse cx="1142" cy="1030" rx="7" ry="4" fill="#9aa0ae"/><path d="M1154,1029 Q1163,1023 1172,1029 Q1172,1041 1163,1043 Q1154,1041 1154,1029 Z" fill="#d4d8e2"/><ellipse cx="1163" cy="1030" rx="7" ry="5" fill="#3d86d8"/></g>
<g fill="#3d86d8" stroke="#111a30"><circle cx="1185" cy="1027" r="4.500"/><circle cx="1179" cy="1033" r="4.500"/><circle cx="1191" cy="1033" r="4.500"/><circle cx="1185" cy="1039" r="4.500"/></g>
<path d="M1216,1028 L1224,1024 L1232,1028 L1232,1038 L1224,1043 L1216,1038 Z M1224,1033 L1216,1028 M1224,1033 L1232,1028 M1224,1033 V1043" fill="none" stroke="#2f323c" stroke-dasharray="2 1"/>
<path d="M1236,1036 L1250,1026 L1257,1030 L1247,1043 L1240,1043 Z" fill="#cfd1d6" stroke="#23262e"/>
<rect x="1258" y="1028" width="10" height="11" fill="#e4e5e8" stroke="#23262e"/><rect x="1270" y="1028" width="10" height="11" fill="#d4d6db" stroke="#23262e"/>
<circle cx="1305" cy="1034" r="8" fill="url(#sph)"/><path d="M1309,1024 v10 M1304,1029 h10 M1305.500,1025.500 l7,7 M1312.500,1025.500 l-7,7" stroke="#7ab8f0" stroke-width="1.2"/>
<rect x="1319" y="1029" width="16" height="12" rx="1" fill="#c8cad0" stroke="#23262e"/><rect x="1323" y="1026" width="6" height="3" fill="#c8cad0"/><circle cx="1327" cy="1035" r="3.600" fill="#555" stroke="#eee"/>
<rect x="0" y="1046" width="1680" height="4" fill="#d4d0c8"/>
</svg>
</body></html>
